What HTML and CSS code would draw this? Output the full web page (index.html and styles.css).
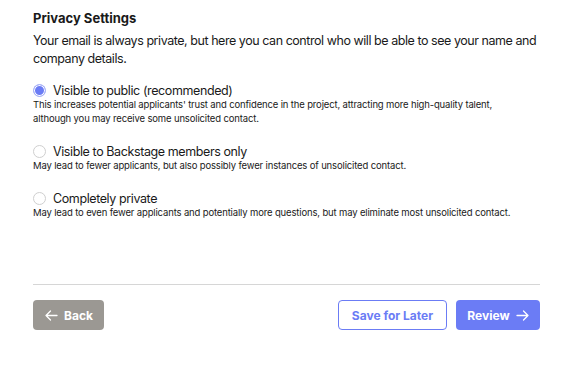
FILE: index.html
```html
<!doctype html>
<html lang="en">
  <head>
    <meta charset="UTF-8" />
    <meta name="viewport" content="width=device-width, initial-scale=1.0" />
    <title>Privacy Settings</title>
    <link rel="stylesheet" href="styles.css">
  </head>
  <body>
    <div class="container">
      <h3 class="title">Privacy Settings</h3>
      <p class="intro">
        Your email is always private, but here you can control who will be able to see your name and<br />
        company details.
      </p>

      <div class="options">
        <label class="option">
          <span class="option-head">
            <input type="radio" name="privacy" value="public" checked />
            <span class="radio"></span>
            <span class="option-label">Visible to public (recommended)</span>
          </span>
          <span class="option-desc">
            This increases potential applicants' trust and confidence in the project, attracting more high-quality talent,<br />
            although you may receive some unsolicited contact.
          </span>
        </label>

        <label class="option">
          <span class="option-head">
            <input type="radio" name="privacy" value="members" />
            <span class="radio"></span>
            <span class="option-label">Visible to Backstage members only</span>
          </span>
          <span class="option-desc">
            May lead to fewer applicants, but also possibly fewer instances of unsolicited contact.
          </span>
        </label>

        <label class="option">
          <span class="option-head">
            <input type="radio" name="privacy" value="private" />
            <span class="radio"></span>
            <span class="option-label">Completely private</span>
          </span>
          <span class="option-desc">
            May lead to even fewer applicants and potentially more questions, but may eliminate most unsolicited contact.
          </span>
        </label>
      </div>

      <div class="footer">
        <button class="btn btn-back" type="button">
          <svg class="arrow" width="13" height="11" viewBox="0 0 13 11" fill="none" stroke="currentColor" stroke-width="1.3" stroke-linecap="round" stroke-linejoin="round"><path d="M12 5.5H1M5.5 1L1 5.5 5.5 10" /></svg>
          Back
        </button>
        <div class="footer-right">
          <button class="btn btn-save" type="button">Save for Later</button>
          <button class="btn btn-review" type="button">
            Review
            <svg class="arrow" width="13" height="11" viewBox="0 0 13 11" fill="none" stroke="currentColor" stroke-width="1.3" stroke-linecap="round" stroke-linejoin="round"><path d="M1 5.5h11M7.5 1L12 5.5 7.5 10" /></svg>
          </button>
        </div>
      </div>
    </div>
  </body>
</html>
```

FILE: styles.css
```css
body {
  margin: 0;
  font-family: Inter, "Noto Sans", sans-serif;
  color: #1a1a1a;
  background: white;
}
.container {
  width: 507px;
  padding: 9px 0 0 33px;
}
.title {
  margin: 0 0 5px;
  font-size: 13px;
  line-height: 18px;
  font-weight: 700;
}
.intro {
  margin: 0 0 14px;
  font-size: 12.5px;
  line-height: 18px;
  letter-spacing: -0.45px;
  white-space: nowrap;
}
.option {
  display: block;
  margin-bottom: 17px;
  cursor: pointer;
}
.option-head {
  display: flex;
  align-items: center;
  gap: 7px;
  height: 16px;
}
.option-head input {
  display: none;
}
.radio {
  width: 11px;
  height: 11px;
  border: 1px solid #cfcfcf;
  border-radius: 50%;
  box-sizing: content-box;
}
.option-head input:checked + .radio {
  background: #6b7cf5;
  border-color: #a9b3f7;
  box-shadow: inset 0 0 0 1px #fff;
}
.option-label {
  font-size: 12.5px;
  letter-spacing: -0.4px;
}
.option-desc {
  display: block;
  font-size: 9.5px;
  line-height: 14px;
  letter-spacing: -0.15px;
  white-space: nowrap;
}
.footer {
  display: flex;
  justify-content: space-between;
  margin-top: 64px;
  padding-top: 15px;
  border-top: 1px solid #d6d6d6;
}
.footer-right {
  display: flex;
  gap: 9px;
}
.btn {
  display: flex;
  align-items: center;
  gap: 6px;
  height: 30px;
  padding: 0;
  border: 1px solid transparent;
  border-radius: 4px;
  font-family: Inter, "Liberation Sans", sans-serif;
  font-size: 12px;
  font-weight: 700;
  white-space: nowrap;
  cursor: pointer;
}
.btn-back {
  width: 71px;
  padding-left: 11px;
  background: #9b9893;
  color: white;
}
.btn-save {
  width: 109px;
  justify-content: center;
  background: white;
  border-color: #6b7cf5;
  color: #6b7cf5;
}
.btn-review {
  width: 84px;
  justify-content: center;
  background: #6b7cf5;
  color: white;
}
```
